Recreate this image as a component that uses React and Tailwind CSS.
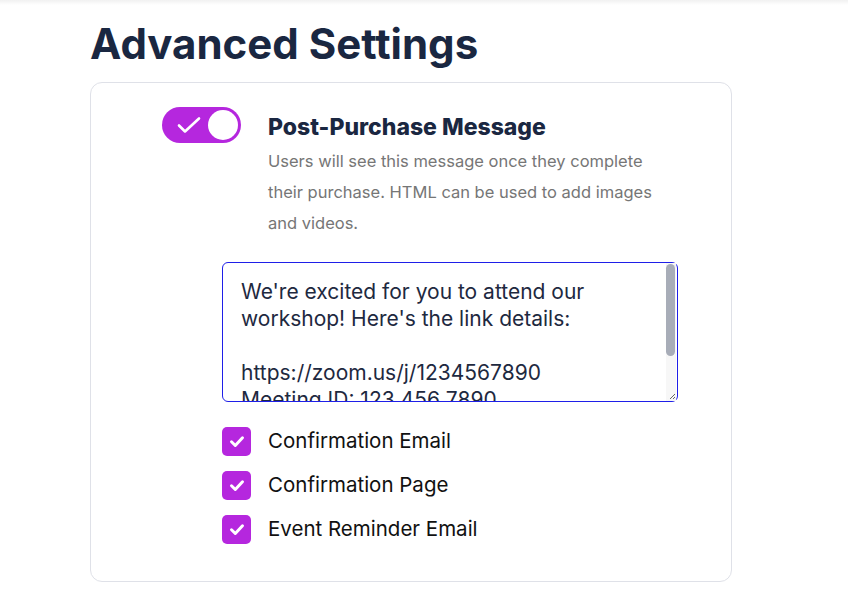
import React from 'react';

const message = `We're excited for you to attend our workshop! Here's the link details:

https://zoom.us/j/1234567890
Meeting ID: 123 456 7890
Passcode: 482913

See you there!`;

const options = ['Confirmation Email', 'Confirmation Page', 'Event Reminder Email'];

const Toggle = () => (
  <div className="relative w-[79px] h-[36px] shrink-0 rounded-full bg-[#b527de]">
    <svg className="absolute left-[14px] top-[9px]" width="26" height="18" viewBox="0 0 26 18" fill="none">
      <path d="M3 9.5l6 6L23 2.5" stroke="white" strokeWidth="2.6" strokeLinecap="round" strokeLinejoin="round" />
    </svg>
    <div className="absolute right-[3px] top-[3px] w-[30px] h-[30px] rounded-full bg-white" />
  </div>
);

const Checkbox = ({ label }) => (
  <label className="flex items-center gap-[17px] h-[44px]">
    <span className="flex items-center justify-center w-[29px] h-[29px] rounded-[5px] bg-[#b527de]">
      <svg width="16" height="13" viewBox="0 0 16 13" fill="none">
        <path d="M2.5 6.8l3.8 3.7L13.5 2.8" stroke="white" strokeWidth="3" strokeLinecap="round" strokeLinejoin="round" />
      </svg>
    </span>
    <span className="text-[20.5px] text-[#111111]">{label}</span>
  </label>
);

export default function App() {
  return (
    <div className="min-h-screen bg-white font-['Inter',sans-serif] relative">
      <div className="absolute inset-x-0 top-0 h-[5px] bg-gradient-to-b from-[#f1f1f1] to-white" />
      <div className="pl-[90px] pt-[20px]">
        <h1 className="text-[42px] leading-[48px] font-bold text-[#1a2741]">Advanced Settings</h1>
        <div className="mt-[14px] w-[642px] rounded-[12px] border border-[#dfe1e8] pt-[24px] pb-[30px]">
          <div className="flex gap-[27px] pl-[71px]">
            <Toggle />
            <div className="pt-[6px]">
              <h2 className="text-[23px] leading-[28px] font-extrabold text-[#1a2741]">Post-Purchase Message</h2>
              <p className="mt-[5px] w-[410px] text-[16.5px] leading-[31px] text-[#767676]">
                Users will see this message once they complete their purchase. HTML can be used to add images and videos.
              </p>
            </div>
          </div>
          <div className="ml-[131px] mt-[23px]">
            <div className="relative w-[456px] h-[140px]">
              <textarea
                readOnly
                defaultValue={message}
                className="block w-full h-full rounded-[6px] border border-[#1f1fe8] bg-white pl-[18px] pr-[20px] pt-[15px] text-[21px] leading-[27px] text-[#1e293f] outline-none resize-none overflow-hidden"
              />
              <div className="absolute right-[2px] top-[1px] bottom-[1px] w-[10px] bg-[#f7f7f7]">
                <div className="mt-[1px] w-[9px] h-[92px] rounded-full bg-[#a8adb8]" />
              </div>
              <svg className="absolute right-[2px] bottom-[2px]" width="8" height="8" viewBox="0 0 8 8">
                <path d="M7 2L2 7M7 5L5 7" stroke="#666" strokeWidth="1" />
              </svg>
            </div>
            <div className="mt-[17px] flex flex-col">
              {options.map((o) => (
                <Checkbox key={o} label={o} />
              ))}
            </div>
          </div>
        </div>
      </div>
    </div>
  );
}
